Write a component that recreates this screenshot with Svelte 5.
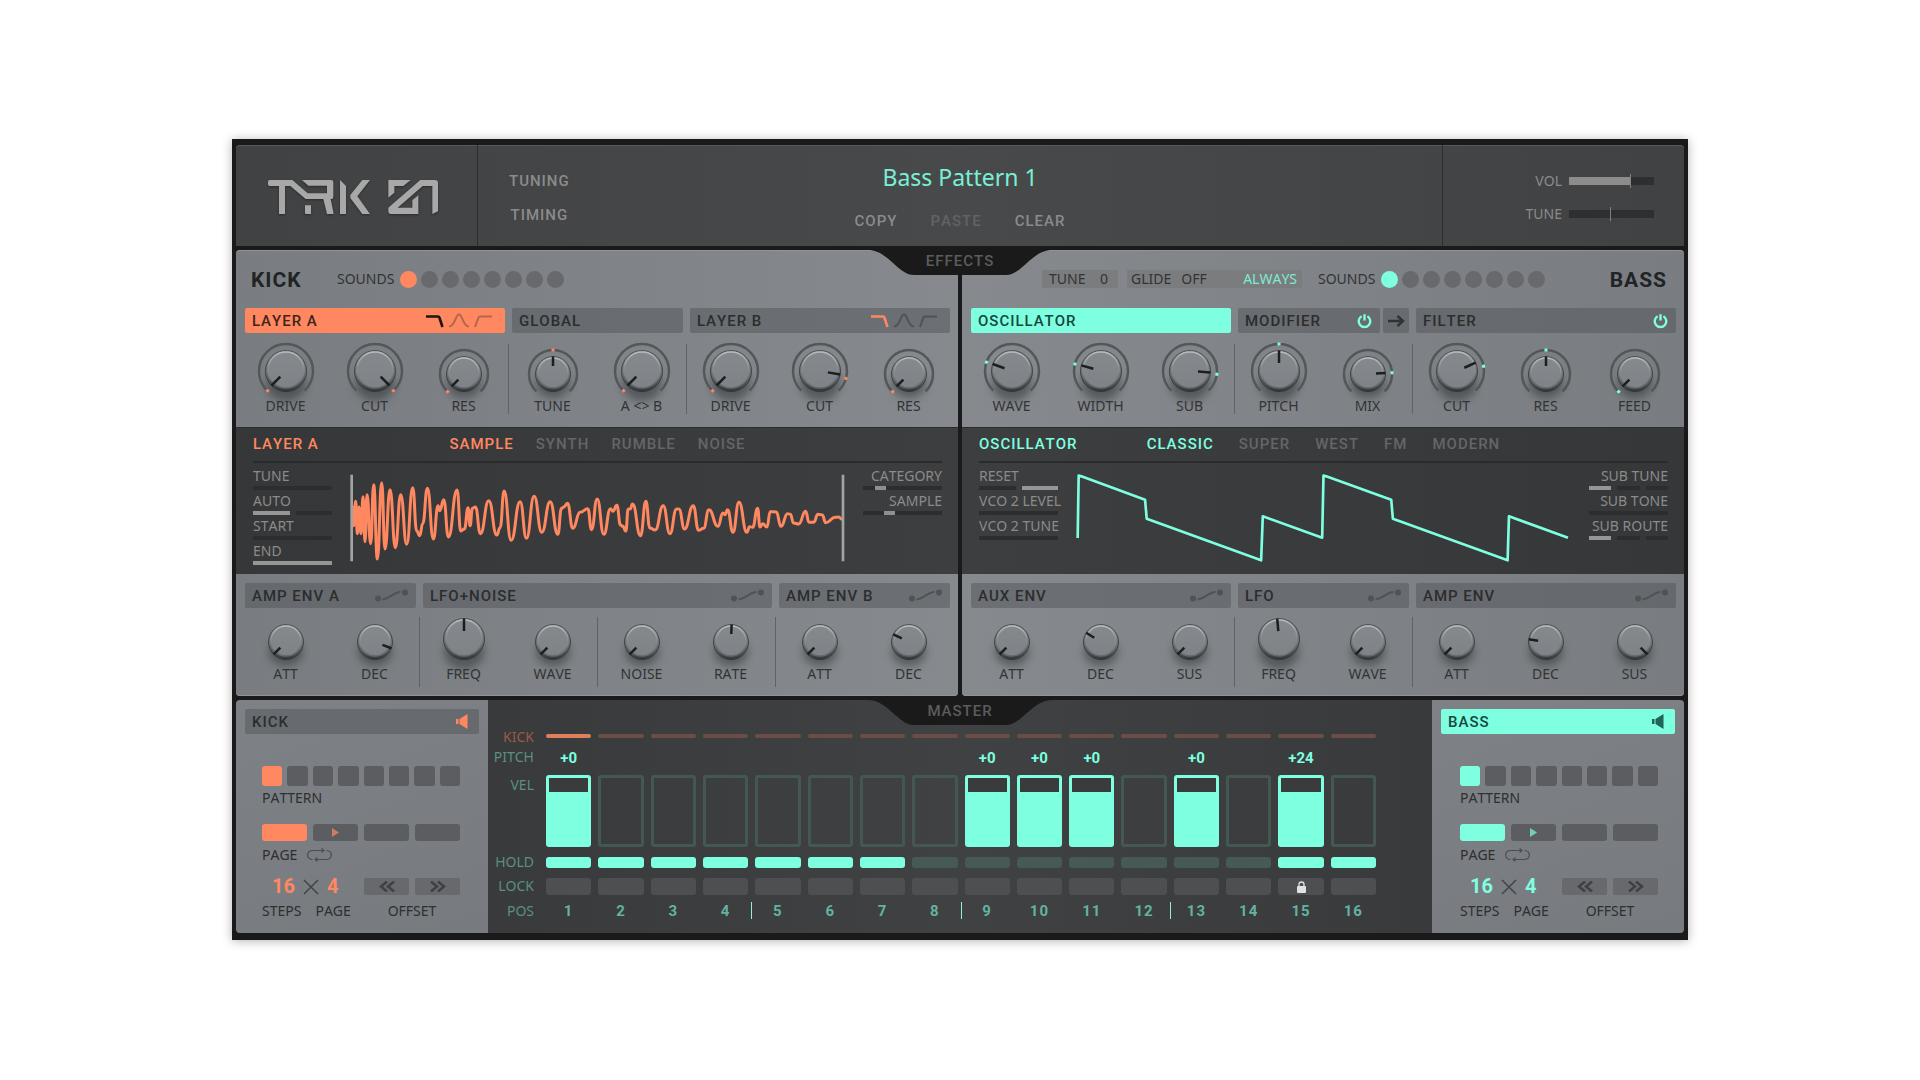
<script>
  const kickTop = [
    { label: 'DRIVE', big: true, angle: -135, dot: -137 },
    { label: 'CUT', big: true, angle: 135, dot: 137 },
    { label: 'RES', angle: -135, dot: -137 },
    { label: 'TUNE', angle: 0, dot: 0, split: true },
    { label: 'A <> B', big: true, angle: -135, dot: -137 },
    { label: 'DRIVE', big: true, angle: -135, dot: -137, split: true },
    { label: 'CUT', big: true, angle: 100, dot: 106 },
    { label: 'RES', angle: -135, dot: -137 }
  ];
  const bassTop = [
    { label: 'WAVE', big: true, angle: -70, dot: -71 },
    { label: 'WIDTH', big: true, angle: -74, dot: -75 },
    { label: 'SUB', big: true, angle: 94, dot: 97 },
    { label: 'PITCH', big: true, angle: 0, dot: 0, split: true },
    { label: 'MIX', angle: 87, dot: 87 },
    { label: 'CUT', big: true, angle: 66, dot: 80, split: true },
    { label: 'RES', angle: 0, dot: 0 },
    { label: 'FEED', angle: -135, dot: -137 }
  ];
  const kickEnv = [
    { label: 'ATT', angle: -135 },
    { label: 'DEC', angle: 111 },
    { label: 'FREQ', big: true, angle: 0, split: true },
    { label: 'WAVE', angle: -135 },
    { label: 'NOISE', angle: -135, split: true },
    { label: 'RATE', angle: 2 },
    { label: 'ATT', angle: -135, split: true },
    { label: 'DEC', angle: -64 }
  ];
  const bassEnv = [
    { label: 'ATT', angle: -135 },
    { label: 'DEC', angle: -58 },
    { label: 'SUS', angle: -135 },
    { label: 'FREQ', big: true, angle: -5, split: true },
    { label: 'WAVE', angle: -135 },
    { label: 'ATT', angle: -135, split: true },
    { label: 'DEC', angle: -81 },
    { label: 'SUS', angle: 135 }
  ];

  const kickLeft = [
    { label: 'TUNE', value: 0 },
    { label: 'AUTO', segments: 2, on: 0 },
    { label: 'START', value: 0 },
    { label: 'END', value: 100 }
  ];
  const kickRight = [
    { label: 'CATEGORY', value: 17, thumb: true },
    { label: 'SAMPLE', value: 31, thumb: true }
  ];
  const bassLeft = [
    { label: 'RESET', segments: 2, on: 1 },
    { label: 'VCO 2 LEVEL', value: 0 },
    { label: 'VCO 2 TUNE', value: 0 }
  ];
  const bassRight = [
    { label: 'SUB TUNE', segments: 3, on: 0 },
    { label: 'SUB TONE', value: 0 },
    { label: 'SUB ROUTE', segments: 3, on: 0 }
  ];

  // Turning points of the kick sample; neighbours are joined by eased curves.
  const samplePeaks = [
    398, 262, 401, 318, 407, 245, 412, 342, 417, 262, 423, 342, 429, 231, 435, 366, 441, 225, 452, 372,
    461, 195, 472, 418, 485, 189, 495, 388, 510, 210, 526, 384, 542, 225, 560, 374, 578, 204, 590, 334,
    599, 348, 608, 312, 622, 206, 640, 358, 654, 258, 659, 273, 671, 240, 685, 352, 711, 211, 722, 334,
    733, 328, 744, 264, 750, 318, 757, 266, 766, 262, 781, 342, 806, 243, 830, 346, 840, 324, 852, 214,
    873, 362, 900, 246, 919, 356, 942, 230, 965, 338, 990, 246, 1013, 344, 1024, 266, 1031, 262, 1042, 251,
    1058, 326, 1080, 278, 1103, 267, 1114, 330, 1131, 238, 1151, 344, 1171, 267, 1178, 275, 1190, 257,
    1201, 316, 1208, 320, 1217, 334, 1224, 268, 1230, 268, 1237, 253, 1261, 348, 1277, 245, 1289, 325,
    1305, 331, 1329, 258, 1349, 342, 1369, 268, 1376, 268, 1393, 328, 1419, 258, 1435, 332, 1450, 326,
    1466, 270, 1493, 320, 1508, 280, 1514, 285, 1522, 270, 1538, 338, 1556, 248, 1580, 338, 1588, 321,
    1597, 323, 1612, 266, 1619, 322, 1627, 312, 1640, 322, 1650, 276, 1668, 277, 1682, 320, 1702, 282,
    1710, 284, 1720, 310, 1735, 313, 1756, 275, 1766, 308, 1780, 308, 1793, 284, 1806, 286, 1816, 309,
    1845, 293, 1855, 292, 1865, 299
  ];
  function easedPath(p) {
    let d = `M${p[0]} ${p[1]}`;
    for (let i = 2; i < p.length; i += 2) {
      const mid = (p[i - 2] + p[i]) / 2;
      d += `C${mid} ${p[i - 1]} ${mid} ${p[i + 1]} ${p[i]} ${p[i + 1]}`;
    }
    return d;
  }
  const samplePath = easedPath(samplePeaks);
  const oscPath =
    'M385 355L388 168L396 170L587 240L592 297L935 422L940 290L1118 354L1122 168L1130 170L1325 240L1330 297L1674 422L1678 290L1855 354';

  const pitches = { 1: '+0', 9: '+0', 10: '+0', 11: '+0', 13: '+0', 15: '+24' };
  const steps = Array.from({ length: 16 }, (_, i) => ({
    n: i + 1,
    kick: i === 0,
    pitch: pitches[i + 1] ?? '',
    hold: i < 7 || i > 13,
    lock: i === 14,
    bar: i > 0 && i % 4 === 0
  }));
  const eight = [0, 1, 2, 3, 4, 5, 6, 7];
</script>

{#snippet knob(k)}
  {@const r = k.big ? 21 : 18}
  {@const cy = k.big ? 30 : 33}
  {@const ring = k.big ? 27 : 24}
  <label class="knob" class:split={k.split}>
    <svg viewBox="0 0 60 57" aria-hidden="true">
      <g transform="translate(30 {cy})">
        <ellipse class="shade" cy={r - 8} rx={r - 1} ry={r - 4} />
        {#if k.dot !== undefined}
          {@const ex = ring * 0.69}
          {@const ey = ring * 0.724}
          <path class="ring" d="M{-ex} {ey}A{ring} {ring} 0 1 1 {ex} {ey}" />
          <rect class="dot" x="-1.5" y={-ring - 1.5} width="3" height="3" transform="rotate({k.dot})" />
        {/if}
        <circle r={r - 0.5} fill="url(#rim)" stroke="url(#edge)" />
        <circle cy="-1" r={r - 3} fill="url(#face)" stroke="url(#gloss)" stroke-width="1.5" />
        <path class="hand" d="M0 -8V{-r + 0.5}" transform="rotate({k.angle})" />
      </g>
    </svg>
    <input type="range" min="-135" max="135" value={k.angle} />
    <span>{k.label}</span>
  </label>
{/snippet}

{#snippet power()}
  <button class="icon" aria-label="Power">
    <svg width="15" height="16" viewBox="0 0 15 16"><path d="M4.6 3.2A5.8 5.8 0 1 0 10.4 3.2M7.5 1.2V7.5" fill="none" stroke="currentColor" stroke-width="2.4" /></svg>
  </button>
{/snippet}

{#snippet filters()}
  <div class="filters">
    <button class="icon chosen" aria-label="Low pass"><svg width="18" height="15" viewBox="0 0 18 15"><path d="M0 3.5H12Q13 3.5 13.400 4.500L16.500 14" fill="none" stroke="currentColor" stroke-width="2.600" /></svg></button>
    <button class="icon" aria-label="Band pass"><svg width="20" height="15" viewBox="0 0 20 15"><path d="M0 13.500C6 13.500 6.500 1.500 10 1.500S14 13.500 20 13.500" fill="none" stroke="currentColor" stroke-width="2" /></svg></button>
    <button class="icon" aria-label="High pass"><svg width="18" height="15" viewBox="0 0 18 15"><path d="M1 14L4.500 4.500Q5 3.500 6 3.500H18" fill="none" stroke="currentColor" stroke-width="2" /></svg></button>
  </div>
{/snippet}

{#snippet envelope()}
  <button class="icon" aria-label="Envelope">
    <svg width="33" height="13" viewBox="0 0 33 13"><circle cx="3" cy="9.500" r="3" fill="currentColor" /><circle cx="30" cy="3.500" r="3" fill="currentColor" /><path d="M7.500 10.300C15 10 18 3.300 25.500 3" fill="none" stroke="currentColor" stroke-width="2" /></svg>
  </button>
{/snippet}

{#snippet sounds()}
  <div class="sounds">
    <span>SOUNDS</span>
    {#each eight as i}<button class:on={i === 0} aria-label="Sound {i + 1}"></button>{/each}
  </div>
{/snippet}

{#snippet params(list)}
  <div class="params">
    {#each list as p}
      {#if p.segments}
        <div class="param">
          <span>{p.label}</span>
          <div class="segments">
            {#each Array(p.segments) as _, i}<button class:on={i === p.on} aria-label="{p.label} {i + 1}"></button>{/each}
          </div>
        </div>
      {:else}
        <label class="param">
          <span>{p.label}</span>
          <input type="range" class="bar" class:thumb={p.thumb} value={p.value} style:--fill="{p.thumb ? 0 : p.value}%" />
        </label>
      {/if}
    {/each}
  </div>
{/snippet}

{#snippet track(name)}
  <section class="track {name.toLowerCase()}">
    <header class="strip">
      <button class="name">{name}</button>
      <button class="icon speaker" aria-label="Solo {name}">
        <svg width="12" height="15" viewBox="0 0 12 15"><path d="M0 5H2.500V10H0ZM3.500 5L11.500 0V15L3.500 10Z" fill="currentColor" /></svg>
      </button>
    </header>
    <div class="controls">
      <div class="patterns">
        {#each eight as i}<button class:on={i === 0} aria-label="Pattern {i + 1}"></button>{/each}
      </div>
      <span class="caption pattern">PATTERN</span>
      <div class="pages">
        {#each [0, 1, 2, 3] as i}
          <button class:on={i === 0} aria-label="Page {i + 1}">
            {#if i === 1}<svg width="7" height="9" viewBox="0 0 7 9"><path d="M0 0L7 4.500L0 9Z" fill="currentColor" /></svg>{/if}
          </button>
        {/each}
      </div>
      <div class="caption loop">
        PAGE
        <button class="icon" aria-label="Loop pages">
          <svg width="25" height="14" viewBox="0 0 25 14"><path d="M5.500 11.500C-1 11.500 -1 2.500 6 2.500H16M19.500 2.500C26 2.500 26 11.500 19 11.500H9M14.500 .5L17 2.500L14.500 4.500M10.500 9.500L8 11.500L10.500 13.500" fill="none" stroke="currentColor" stroke-width="1.200" /></svg>
        </button>
      </div>
      <div class="counts">
        <div class="numbers">
          <button>16</button>
          <svg width="16" height="16" viewBox="0 0 16 16" aria-hidden="true"><path d="M1 1L15 15M15 1L1 15" stroke="currentColor" stroke-width="1.500" /></svg>
          <button>4</button>
        </div>
        <div class="shift">
          <button aria-label="Offset left"><svg width="16" height="11" viewBox="0 0 16 11"><path d="M8 .5L2 5.500L8 10.500M15 .5L9 5.500L15 10.500" fill="none" stroke="currentColor" stroke-width="2.500" /></svg></button>
          <button aria-label="Offset right"><svg width="16" height="11" viewBox="0 0 16 11"><path d="M1 .5L7 5.500L1 10.500M8 .5L14 5.500L8 10.500" fill="none" stroke="currentColor" stroke-width="2.500" /></svg></button>
        </div>
        <div class="caption names"><span>STEPS</span><span>PAGE</span></div>
        <span class="caption offset">OFFSET</span>
      </div>
    </div>
  </section>
{/snippet}

{#snippet notch(text)}
  <button class="notch">
    <svg viewBox="0 0 184 29" aria-hidden="true"><path d="M0 0H184V4C164 4 154 29 138 29H46C30 29 20 4 0 4Z" fill="#1a1a1a" /></svg>
    <span>{text}</span>
  </button>
{/snippet}

<svg class="defs" width="0" height="0" aria-hidden="true">
  <defs>
    <linearGradient id="rim" x1="0" y1="0" x2="0" y2="1"><stop offset="0" stop-color="#7f8386" /><stop offset=".55" stop-color="#707376" /><stop offset=".8" stop-color="#505356" /><stop offset="1" stop-color="#333537" /></linearGradient>
    <linearGradient id="edge" x1="0" y1="0" x2="0" y2="1"><stop offset="0" stop-color="#515457" /><stop offset="1" stop-color="#333538" /></linearGradient>
    <linearGradient id="face" x1="0" y1="0" x2="0" y2="1"><stop offset="0" stop-color="#85888c" /><stop offset="1" stop-color="#7f8387" /></linearGradient>
    <linearGradient id="gloss" x1="0" y1="0" x2="0" y2="1"><stop offset="0" stop-color="#b9bcbe" /><stop offset=".45" stop-color="#8b8f92" /><stop offset="1" stop-color="#65686b" /></linearGradient>
  </defs>
</svg>

<main>
  <div class="synth">
    <header class="top">
      <div class="logo">
        <svg width="170" height="34" viewBox="141 150 510 102" role="img" aria-label="TRK 01">
          <g fill="#a8a8a8">
            <path d="M146 150H214L260 190H318V167H262L243 150H330Q337 150 337 157V200Q337 207 329 207L338 252H318L307 207H254L208 168H192V252H174V168H146Q141 168 141 163V155Q141 150 146 150Z" />
            <path d="M252 226H270V252H256Q252 252 252 248Z" />
            <path d="M357 150L375 168V252H357Z" />
            <path d="M424 150H447L409 199L447 252H424L388 204V195Z" />
            <path d="M502 150H569L547 168H520V188L502 203Z" />
            <path d="M598 150H642Q651 150 651 159V244L634 252V168H605L530 233H574V211L592 196V252H510Q502 252 502 244V233Z" />
          </g>
        </svg>
      </div>
      <nav class="menu">
        <button class="tab">TUNING</button>
        <button class="tab">TIMING</button>
      </nav>
      <div class="preset">
        <h1>Bass Pattern 1</h1>
        <div class="edit">
          <button class="tab">COPY</button>
          <button class="tab" disabled>PASTE</button>
          <button class="tab">CLEAR</button>
        </div>
      </div>
      <div class="levels">
        <label><span>VOL</span><input type="range" class="level" value="73" style:--fill="73%" /></label>
        <label><span>TUNE</span><input type="range" class="level" value="49" style:--fill="0%" /></label>
      </div>
    </header>

    <div class="voices">
      {@render notch('EFFECTS')}
      <section class="voice kick">
        <header class="title">
          <h2>KICK</h2>
          {@render sounds()}
        </header>
        <div class="strips top-strips">
          <div class="strip active"><button class="name">LAYER A</button>{@render filters()}</div>
          <div class="strip"><button class="name">GLOBAL</button></div>
          <div class="strip"><button class="name">LAYER B</button>{@render filters()}</div>
        </div>
        <div class="knobs main-knobs">{#each kickTop as k}{@render knob(k)}{/each}</div>
        <div class="display">
          <div class="tabs">
            <h3>LAYER A</h3>
            <div class="tab-list kick-tabs">
              <button class="tab on">SAMPLE</button>
              <button class="tab">SYNTH</button>
              <button class="tab">RUMBLE</button>
              <button class="tab">NOISE</button>
            </div>
          </div>
          <div class="screen">
            {@render params(kickLeft)}
            <svg viewBox="390 160 1484 270" preserveAspectRatio="none" role="img" aria-label="Sample waveform">
              <path class="wave" d={samplePath} />
              <path d="M395 165V425M1868 165V425" stroke="#a3a3a4" stroke-width="8" />
            </svg>
            <div class="right">{@render params(kickRight)}</div>
          </div>
        </div>
        <div class="strips env-strips">
          <div class="strip"><button class="name">AMP ENV A</button>{@render envelope()}</div>
          <div class="strip"><button class="name">LFO+NOISE</button>{@render envelope()}</div>
          <div class="strip"><button class="name">AMP ENV B</button>{@render envelope()}</div>
        </div>
        <div class="knobs env-knobs">{#each kickEnv as k}{@render knob(k)}{/each}</div>
      </section>

      <section class="voice bass">
        <header class="title">
          <button class="chip">TUNE <b>0</b></button>
          <div class="chip glide"><span>GLIDE</span><button>OFF</button><button class="always">ALWAYS</button></div>
          {@render sounds()}
          <h2>BASS</h2>
        </header>
        <div class="strips top-strips">
          <div class="strip active"><button class="name">OSCILLATOR</button></div>
          <div class="pair">
            <div class="strip"><button class="name">MODIFIER</button>{@render power()}</div>
            <button class="strip arrow" aria-label="Route to filter"><svg width="17" height="12" viewBox="0 0 17 12"><path d="M0 6H14M9.500 1L15 6L9.500 11" fill="none" stroke="currentColor" stroke-width="2.400" /></svg></button>
          </div>
          <div class="strip"><button class="name">FILTER</button>{@render power()}</div>
        </div>
        <div class="knobs main-knobs">{#each bassTop as k}{@render knob(k)}{/each}</div>
        <div class="display">
          <div class="tabs">
            <h3>OSCILLATOR</h3>
            <div class="tab-list">
              <button class="tab on">CLASSIC</button>
              <button class="tab">SUPER</button>
              <button class="tab">WEST</button>
              <button class="tab">FM</button>
              <button class="tab">MODERN</button>
            </div>
          </div>
          <div class="screen">
            {@render params(bassLeft)}
            <svg viewBox="380 160 1484 270" preserveAspectRatio="none" role="img" aria-label="Oscillator waveform">
              <path class="wave" d={oscPath} />
            </svg>
            <div class="right">{@render params(bassRight)}</div>
          </div>
        </div>
        <div class="strips env-strips">
          <div class="strip"><button class="name">AUX ENV</button>{@render envelope()}</div>
          <div class="strip"><button class="name">LFO</button>{@render envelope()}</div>
          <div class="strip"><button class="name">AMP ENV</button>{@render envelope()}</div>
        </div>
        <div class="knobs env-knobs">{#each bassEnv as k}{@render knob(k)}{/each}</div>
      </section>
    </div>

    <div class="sequencer">
      {@render notch('MASTER')}
      {@render track('KICK')}
      <section class="grid">
        <span class="row kick-label">KICK</span>
        {#each steps as s}<button class="hit" class:on={s.kick} aria-label="Kick step {s.n}"></button>{/each}
        <span class="row">PITCH</span>
        {#each steps as s}<span class="value">{s.pitch}</span>{/each}
        <span class="row">VEL</span>
        {#each steps as s}<button class="vel" class:on={s.pitch} aria-label="Velocity {s.n}"></button>{/each}
        <span class="row">HOLD</span>
        {#each steps as s}<button class="hold" class:on={s.hold} aria-label="Hold {s.n}"></button>{/each}
        <span class="row">LOCK</span>
        {#each steps as s}
          <button class="lock" aria-label="Lock {s.n}">
            {#if s.lock}<svg width="9" height="12" viewBox="0 0 9 12"><path d="M2 6V3.500A2.500 2.500 0 0 1 7 3.500V6" fill="none" stroke="#e2e2e2" stroke-width="1.300" /><rect y="5" width="9" height="7" rx="1" fill="#e2e2e2" /></svg>{/if}
          </button>
        {/each}
        <span class="row">POS</span>
        {#each steps as s}<span class="pos" class:beat={s.bar}>{s.n}</span>{/each}
      </section>
      {@render track('BASS')}
    </div>
  </div>
</main>

<style>
  :global(body) {
    margin: 0;
    background: #fff;
  }
  * {
    box-sizing: border-box;
  }
  button {
    margin: 0;
    padding: 0;
    border: 0;
    background: none;
    color: inherit;
    font: inherit;
    font-kerning: inherit;
    letter-spacing: inherit;
    cursor: pointer;
  }
  svg {
    display: block;
  }
  h1, h2, h3 {
    margin: 0;
  }
  .defs {
    position: absolute;
  }
  main {
    display: grid;
    align-items: center;
    min-height: 100vh;
    padding: 0 12px 1px;
    font: 14px/16px 'Noto Sans', sans-serif;
    font-kerning: none;
    color: #313336;
  }
  .synth {
    width: 100%;
    max-width: 1456px;
    margin: 0 auto;
    padding: 6px 4px 7px;
    background: #1a1a1a;
    box-shadow: 0 1px 10px rgba(0, 0, 0, 0.3);
  }
  .kick {
    --accent: #ff8860;
    --active-text: #3d231b;
  }
  .bass {
    --accent: #7dffe0;
    --active-text: #17463c;
  }
  .tab, .name, h2, h3, .notch, .value, .pos, .numbers button {
    font-family: Roboto, sans-serif;
    font-kerning: none;
  }
  .tab, .name, h3, .notch {
    font-size: 15px;
    font-weight: 500;
    letter-spacing: 1px;
  }

  /* header */
  .top {
    display: grid;
    grid-template-columns: 242px 1fr 2fr 1fr 242px;
    align-items: center;
    height: 101px;
    border-radius: 4px 4px 0 0;
    background: linear-gradient(90deg, #414243, #48494a 50%, #414243);
    box-shadow: inset 0 1px #58595a;
    color: #8b8b8c;
  }
  .logo {
    display: grid;
    place-items: center;
    height: 100%;
    padding: 3px 8px 0 0;
    border-right: 1px solid #2c2d2e;
  }
  .logo svg {
    filter: drop-shadow(0 1px 1px #2a2a2a);
  }
  .menu {
    display: grid;
    gap: 18px;
    justify-items: center;
    justify-self: start;
    padding: 4px 0 0 31px;
  }
  .preset {
    display: grid;
    justify-items: center;
    gap: 21px;
  }
  h1 {
    font: 400 23px/30px 'Noto Sans', sans-serif;
    font-kerning: none;
    color: #79f0d5;
  }
  .edit {
    display: flex;
    gap: 33px;
  }
  .edit .tab:disabled {
    color: #626364;
  }
  .levels {
    grid-column: 5;
    display: grid;
    gap: 17px;
    align-content: center;
    height: 100%;
    padding: 3px 30px 0 0;
    border-left: 1px solid #2c2d2e;
  }
  .levels label {
    display: flex;
    justify-content: flex-end;
    align-items: center;
    gap: 7px;
  }
  input {
    appearance: none;
    margin: 0;
    padding: 0;
    background: none;
  }
  .level {
    width: 85px;
    height: 14px;
    background: linear-gradient(90deg, #8c8c8d var(--fill), #2e2f30 var(--fill)) center / 100% 8px no-repeat;
  }
  .level::-webkit-slider-thumb {
    appearance: none;
    width: 1px;
    height: 14px;
    background: #808081;
  }

  /* voices */
  .voices {
    position: relative;
    display: grid;
    grid-template-columns: 1fr 1fr;
    gap: 4px;
    margin-top: 4px;
  }
  .notch {
    position: absolute;
    top: -4px;
    left: 50%;
    display: grid;
    width: 184px;
    height: 29px;
    transform: translateX(-50%);
    color: #5c5c5c;
  }
  .notch > * {
    grid-area: 1 / 1;
    place-self: center;
  }
  .notch svg {
    width: 184px;
    height: 29px;
  }
  .voice {
    border-radius: 4px;
    background: linear-gradient(90deg, #797d81, #868a8e);
    box-shadow: inset 0 1px #909498, inset 0 -1px #909498;
    overflow: hidden;
  }
  .voice.bass {
    background: linear-gradient(270deg, #797d81, #868a8e);
  }
  .title {
    display: flex;
    align-items: center;
    height: 58px;
    padding: 0 17px 0 15px;
  }
  h2 {
    font-size: 21px;
    line-height: 24px;
    font-weight: 700;
    letter-spacing: 1px;
    color: #212325;
  }
  .kick h2 {
    width: 86px;
    padding-top: 2px;
  }
  .bass h2 {
    margin-left: auto;
    padding-top: 2px;
  }
  .bass .title {
    padding-left: 80px;
  }
  .chip {
    display: flex;
    justify-content: space-between;
    width: 76px;
    height: 18px;
    margin-right: 9px;
    padding: 0 10px 0 7px;
    line-height: 18px;
    background: #7b7c7e;
  }
  .chip b {
    font-weight: 400;
  }
  .glide {
    justify-content: flex-start;
    width: 175px;
    margin-right: 16px;
    padding: 0 5px 0 4px;
  }
  .glide button {
    margin-left: 10px;
  }
  .glide .always {
    margin-left: auto;
    color: #7debd2;
  }
  .sounds {
    display: flex;
    align-items: center;
    gap: 4px;
  }
  .sounds span {
    margin-right: 2px;
  }
  .sounds button {
    width: 17px;
    height: 17px;
    border-radius: 50%;
    background: #67696c;
  }
  .sounds button.on {
    background: var(--accent);
  }
  .strips {
    display: grid;
    gap: 7px;
    padding: 0 8px 0 9px;
  }
  .top-strips, .bass .env-strips {
    grid-template-columns: 260fr 171fr 260fr;
  }
  .kick .env-strips {
    grid-template-columns: 171fr 349fr 171fr;
  }
  .env-strips {
    padding-top: 9px;
  }
  .strip {
    display: flex;
    align-items: center;
    height: 25px;
    padding: 0 8px 0 7px;
    border-radius: 2px;
    background: rgba(82, 84, 87, 0.5);
    color: #505255;
  }
  .name {
    flex: 1;
    text-align: left;
    color: #2b2d2f;
  }
  .strip.active {
    background: var(--accent);
    color: #b3664e;
  }
  .active .name {
    color: var(--active-text);
  }
  .bass .icon {
    color: inherit;
  }
  .top-strips .strip > .icon {
    color: var(--accent);
  }
  .filters {
    display: flex;
    gap: 5px;
    padding-right: 5px;
  }
  .chosen {
    color: var(--accent);
  }
  .active .chosen {
    color: #1d1412;
  }
  .pair {
    display: grid;
    grid-template-columns: 1fr 26px;
    gap: 3px;
  }
  .arrow {
    justify-content: center;
    padding: 0;
    color: #303234;
  }
  .knobs {
    display: grid;
    grid-template-columns: repeat(8, 1fr);
    padding: 0 5px;
  }
  .main-knobs {
    padding-top: 8px;
    padding-bottom: 13px;
  }
  .env-knobs {
    padding-top: 1px;
    padding-bottom: 9px;
  }
  .knob {
    display: grid;
    justify-items: center;
  }
  .env-knobs .knob {
    padding-bottom: 5px;
  }
  .split {
    background: linear-gradient(#606366, #606366) left 3px / 1px 70px no-repeat;
  }
  .env-knobs .split {
    background-position: left 8px;
  }
  .knob svg {
    grid-area: 1 / 1;
    width: 60px;
    height: 57px;
    overflow: visible;
  }
  .knob input {
    grid-area: 1 / 1;
    width: 60px;
    opacity: 0;
  }
  .shade {
    fill: #2b2d2f;
    opacity: 0.5;
    filter: blur(4px);
  }
  .ring {
    fill: none;
    stroke: #54575a;
    stroke-width: 2.5px;
  }
  .dot {
    fill: var(--accent);
  }
  .hand {
    stroke: #1c1e1f;
    stroke-width: 2.5px;
  }

  /* display */
  .display {
    padding: 0 16px 0 17px;
    background: linear-gradient(90deg, #363738, #3d3e3f);
    box-shadow: inset 0 1px #2c2d2e;
    color: #8b8b8c;
  }
  .bass .display {
    background: linear-gradient(270deg, #363738, #3d3e3f);
  }
  .tabs {
    display: grid;
    grid-template-columns: 1fr auto 1fr;
    align-items: center;
    height: 36px;
    border-bottom: 2px solid #2a2b2c;
  }
  h3, .tab.on {
    color: var(--accent);
  }
  h3 {
    line-height: 16px;
  }
  .tab-list {
    display: flex;
    gap: 25px;
    color: #656667;
  }
  .kick-tabs {
    gap: 22px;
  }
  .screen {
    display: grid;
    grid-template-columns: 79px 1fr 79px;
    gap: 18px;
    height: 111px;
    padding-top: 2px;
  }
  .screen > svg {
    width: 100%;
    height: 90px;
    margin-top: 8px;
  }
  .wave {
    fill: none;
    stroke: var(--accent);
    stroke-width: 8px;
    stroke-linejoin: round;
  }
  .kick .wave {
    stroke-width: 9px;
  }
  .param {
    display: flex;
    flex-direction: column;
    height: 25px;
    line-height: 21px;
    white-space: nowrap;
  }
  .right .param {
    direction: rtl;
  }
  .right .segments, .right input {
    direction: ltr;
  }
  .bar, .segments {
    width: 100%;
    height: 4px;
  }
  .bar {
    background: linear-gradient(90deg, #969697 var(--fill), #2c2d2e var(--fill));
  }
  .bar::-webkit-slider-thumb {
    appearance: none;
    width: 11px;
    height: 4px;
    background: none;
  }
  .bar.thumb::-webkit-slider-thumb {
    background: #8f8f90;
  }
  .segments {
    display: flex;
    gap: 6px;
  }
  .segments button {
    flex: 1;
    background: #2c2d2e;
  }
  .segments .on {
    background: #969697;
  }

  /* sequencer */
  .sequencer {
    position: relative;
    display: grid;
    grid-template-columns: 252px 1fr 252px;
    margin-top: 4px;
    border-radius: 4px;
    background: #3c3d3e;
  }
  .track {
    padding: 9px 9px 14px;
    border-radius: 4px 0 0 4px;
    background: linear-gradient(160deg, #7e8286, #777a7e);
    color: #2d2f31;
  }
  .track.bass {
    border-radius: 0 4px 4px 0;
  }
  .track.bass .strip {
    background: var(--accent);
    color: #236355;
  }
  .track.bass .name {
    color: #17463c;
  }
  .track .strip {
    padding-right: 11px;
  }
  .kick .speaker {
    color: var(--accent);
  }
  .controls {
    padding: 32px 19px 0 17px;
  }
  .bass .controls {
    padding: 32px 17px 0 19px;
  }
  .patterns {
    display: grid;
    grid-template-columns: repeat(8, 1fr);
    gap: 5px;
    height: 20px;
  }
  .patterns button, .pages button {
    border-radius: 3px;
    background: #5b5d60;
  }
  .patterns .on, .pages .on {
    background: var(--accent);
  }
  .caption {
    display: block;
    line-height: 16px;
  }
  .pattern {
    margin: 4px 0 18px;
  }
  .pages {
    display: grid;
    grid-template-columns: repeat(4, 1fr);
    gap: 6px;
    height: 17px;
  }
  .pages button {
    display: grid;
    place-items: center;
    color: var(--accent);
  }
  .pages svg {
    opacity: 0.7;
  }
  .loop {
    display: flex;
    align-items: center;
    gap: 10px;
    margin: 6px 0 15px;
  }
  .loop .icon {
    color: #4b4d50;
  }
  .counts {
    display: grid;
    grid-template-columns: 1fr 1fr;
    gap: 8px 6px;
    align-items: center;
  }
  .numbers {
    display: flex;
    align-items: center;
    height: 17px;
    gap: 8px;
    padding-left: 10px;
    color: #424447;
  }
  .numbers button {
    font-size: 20px;
    font-weight: 700;
    line-height: 17px;
    color: var(--accent);
  }
  .numbers svg {
    flex: none;
  }
  .shift {
    display: grid;
    grid-template-columns: 1fr 1fr;
    gap: 6px;
  }
  .shift button {
    display: grid;
    place-items: center;
    height: 17px;
    border-radius: 2px;
    background: #67696c;
    color: #3e4043;
  }
  .names {
    display: flex;
    gap: 14px;
  }
  .offset {
    text-align: center;
  }
  .grid {
    display: grid;
    grid-template-columns: 46px repeat(16, 1fr);
    grid-template-rows: 20px 28px 77px 24px 25px 20px;
    column-gap: 7px;
    align-items: start;
    padding: 27px 56px 0 5px;
    background: linear-gradient(90deg, #393a3b, #404142 50%, #393a3b);
    color: #5a8f83;
  }
  .row {
    margin-right: 5px;
    line-height: 20px;
    text-align: right;
  }
  .kick-label {
    color: #9a5a46;
  }
  .hit {
    height: 4px;
    margin-top: 7px;
    border-radius: 2px;
    background: #6a4e46;
  }
  .hit.on {
    background: #e07f5c;
  }
  .value, .pos {
    font-size: 15px;
    font-weight: 700;
    line-height: 20px;
    text-align: center;
  }
  .value {
    line-height: 22px;
    color: #7dffe0;
  }
  .pos {
    letter-spacing: 1px;
    color: #62b3a1;
  }
  .beat {
    height: 17px;
    margin: 1px 0 0 -4px;
    padding-left: 3px;
    border-left: 1px solid #8ff0da;
    line-height: 18px;
  }
  .vel {
    height: 72px;
    border: 3px solid #445853;
    border-radius: 3px;
  }
  .vel.on {
    border: 0;
    background: linear-gradient(#3a3b3c, #3a3b3c) center 3px / calc(100% - 6px) 14px no-repeat, #7dffe0;
  }
  .hold, .lock {
    border-radius: 3px;
  }
  .hold {
    height: 11px;
    margin-top: 5px;
    background: #455a55;
  }
  .hold.on {
    background: #7dffe0;
  }
  .lock {
    display: grid;
    place-items: center;
    height: 17px;
    margin-top: 2px;
    background: #4e4f51;
  }
</style>
